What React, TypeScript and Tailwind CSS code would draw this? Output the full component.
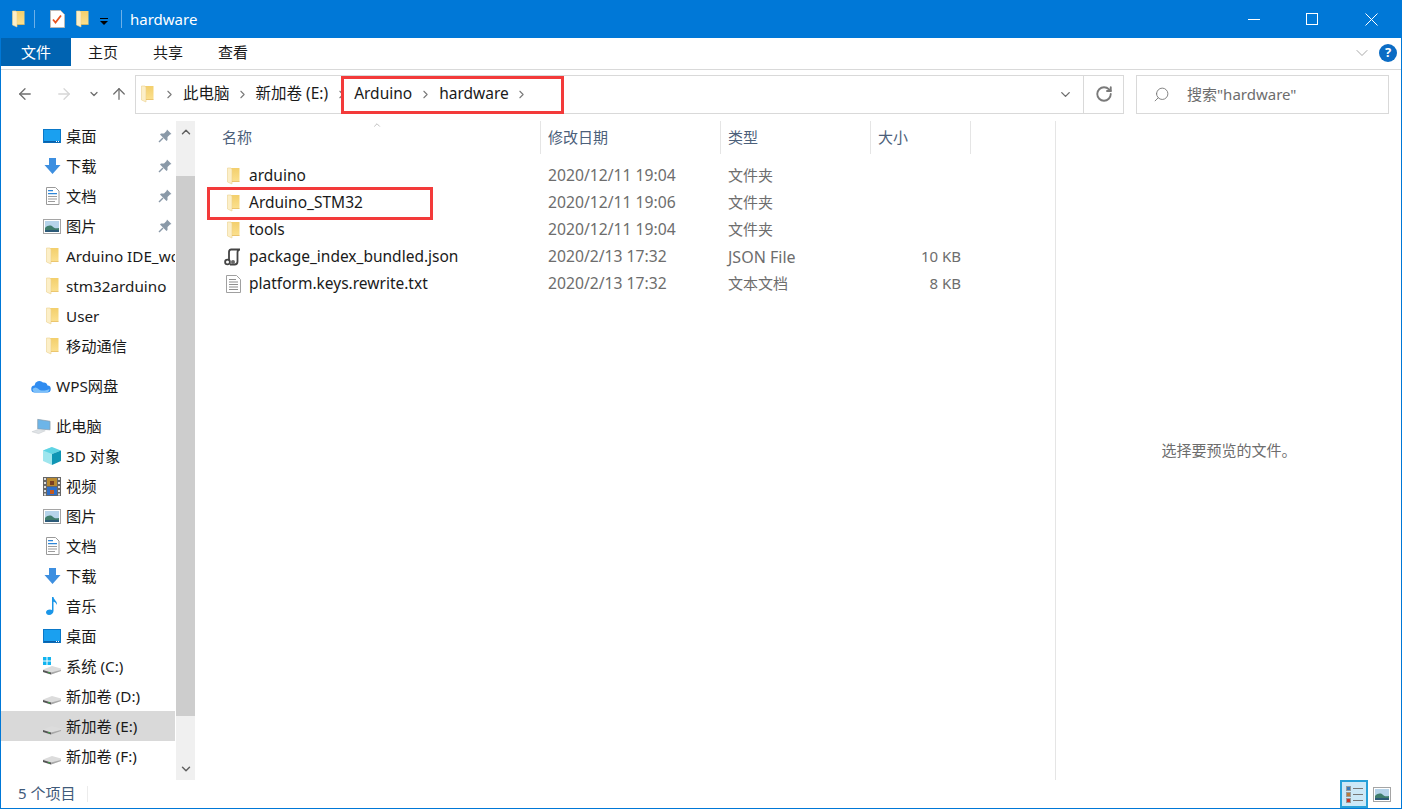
import { ReactNode } from "react";
import { ArrowLeft, ArrowRight, ArrowUp, ChevronDown, ChevronRight, ChevronUp, RotateCw, Search } from "lucide-react";

function Folder({ className = "w-[13px] h-[18px]" }: { className?: string }) {
  return (
    <svg className={className} viewBox="0 0 13 18">
      <defs>
        <linearGradient id="folderBody" x1="0" y1="0" x2="0" y2="1">
          <stop offset="0" stopColor="#f3cf6c" />
          <stop offset="1" stopColor="#fbe08e" />
        </linearGradient>
      </defs>
      <path d="M3 1h9.500v13.500H3z" fill="url(#folderBody)" />
      <path d="M.5 1H4l1 1.500v14.500L.5 15z" fill="#fcefc8" stroke="#ecd28e" strokeWidth="0.6" />
      <path d="M5 14h7.500v.8H5z" fill="#e6bb58" />
    </svg>
  );
}

function Desktop() {
  return (
    <svg className="w-[18px] h-[14px]" viewBox="0 0 18 14">
      <rect x="0.5" y="0.5" width="17" height="13" fill="#1aa0f0" stroke="#0a78c8" />
      <path d="M1 12h16v1.500H1z" fill="#0a5fa8" />
      <path d="M13 12h1v1h-1zM15 12h1v1h-1z" fill="#fff" />
    </svg>
  );
}

function Download() {
  return (
    <svg className="w-[17px] h-[18px]" viewBox="0 0 17 18">
      <path d="M5 1h7v7h4.500l-8 9-8-9H5z" fill="#3d8fe0" />
    </svg>
  );
}

function Doc() {
  return (
    <svg className="w-[15px] h-[18px]" viewBox="0 0 15 18">
      <path d="M1.500.5h9l3.500 3.500v13.500H1.500z" fill="#fff" stroke="#9a9a9a" />
      <path d="M3 3h5v1.200H3zM3 6h9v1.200H3z" fill="#2f86d8" />
      <path d="M3 9h9v1H3zM3 11.500h9v1H3zM3 14h7v1H3z" fill="#9c9c9c" />
    </svg>
  );
}

function Picture() {
  return (
    <svg className="w-[18px] h-[15px]" viewBox="0 0 18 15">
      <rect x="0.5" y="0.5" width="17" height="14" fill="#fff" stroke="#a5a5a5" />
      <rect x="2" y="2" width="14" height="11" fill="#b6d4ea" />
      <path d="M2 9c3-3 6-3 8-1s4 1 6 1v4H2z" fill="#3f7d6c" />
      <path d="M2 11h14v2H2z" fill="#2c5a78" />
    </svg>
  );
}

function Pin() {
  return (
    <svg className="w-[14px] h-[14px]" viewBox="0 0 14 14">
      <path d="M9 .5L13.500 5 12 5.500 9.500 8 9.500 11 8.500 12 2 5.500 3 4.500 6 4.500 8.500 2z" fill="#8a99a8" />
      <path d="M5 9L1 13" stroke="#8a99a8" strokeWidth="1.500" />
    </svg>
  );
}

function Cloud() {
  return (
    <svg className="w-[20px] h-[14px]" viewBox="0 0 20 14">
      <path d="M4 13.500a3.500 3.500 0 0 1-.5-7A5 5 0 0 1 12 3.500a4 4 0 0 1 4.500 3 3.500 3.500 0 0 1-.5 7z" fill="#2f8cf0" />
      <path d="M1.500 10c2-2 4-2 6 0s6 2 11 0c-.5 2-1.500 3.500-3 3.500H4c-1.300 0-2.200-1.500-2.500-3.500z" fill="#7cc0fa" />
    </svg>
  );
}

function Pc() {
  return (
    <svg className="w-[21px] h-[17px]" viewBox="0 0 21 17">
      <path d="M7 1l13 2v9l-13-1z" fill="#6db5e8" stroke="#8a9aa8" strokeWidth="0.7" />
      <path d="M1 14l7-2.500 7 1.500-7 3z" fill="#dfe3e6" stroke="#c3c8cc" strokeWidth="0.5" />
    </svg>
  );
}

function Cube() {
  return (
    <svg className="w-[18px] h-[18px]" viewBox="0 0 18 18">
      <path d="M9 0L0 3.500v10.500L9 18z" fill="#9fe6ee" />
      <path d="M0 3.500L9 7l9-3.500L9 0z" fill="#5fd4e4" />
      <path d="M9 7v11l9-4V3.500z" fill="#0f95b4" />
    </svg>
  );
}

function Film() {
  return (
    <svg className="w-[18px] h-[19px]" viewBox="0 0 18 19">
      <rect width="18" height="19" fill="#666" />
      <path d="M1 1h2v2H1zM1 5h2v2H1zM1 9h2v2H1zM1 13h2v2H1zM1 16.500h2v2H1zM15 1h2v2h-2zM15 5h2v2h-2zM15 9h2v2h-2zM15 13h2v2h-2zM15 16.500h2v2h-2z" fill="#ddd" />
      <rect x="4" y="1" width="10" height="8" fill="#b98a30" />
      <rect x="4" y="10" width="10" height="8" fill="#2f6fc8" />
      <path d="M7 4h4v4H7z" fill="#7a3f20" />
      <path d="M7 13h4v4H7z" fill="#c25a20" />
    </svg>
  );
}

function Music() {
  return (
    <svg className="w-[14px] h-[18px]" viewBox="0 0 14 18">
      <path d="M7 0h1.500c.3 3 4 4 3.500 8-.8-2-2.200-3-3.500-3.300V14c0 2.300-2 4-4.500 4C2.300 18 1 16.800 1 15.300S2.800 12.500 5 12.500c.8 0 1.500.2 2 .5z" fill="#1a96e8" />
    </svg>
  );
}

function Drive({ win = false }: { win?: boolean }) {
  return (
    <svg className="w-[18px] h-[18px]" viewBox="0 0 18 18">
      <path d="M0 12.500L9 9l9 2.500v2.500L8 17.500 0 15z" fill="#dcdcdc" />
      <path d="M0 13l8 2.500V17.500L0 15z" fill="#555" />
      <path d="M8 15.500l10-2.500V14L8 17.500z" fill="#a8a8a8" />
      <path d="M5 15l2 .6v.8l-2-.6z" fill="#3fae49" />
      {win && <path d="M0 0h3.500v3.500H0zM4.500 0H8v3.500H4.500zM0 4.500h3.500V8H0zM4.500 4.500H8V8H4.500z" fill="#10b4f0" />}
    </svg>
  );
}

function Script() {
  return (
    <svg className="w-[18px] h-[18px]" viewBox="0 0 18 18">
      <path d="M7 1.500h9M7 1.500c-2 0-2 2-2 3V12M16 1.500c-2 0-2.500 1-2.500 3v9c0 2-1.500 3-3 3H6" fill="none" stroke="#444" strokeWidth="1.800" />
      <circle cx="3.500" cy="14" r="2.400" fill="#fff" stroke="#444" strokeWidth="1.800" />
      <circle cx="9" cy="14" r="2" fill="#666" />
    </svg>
  );
}

function TextFile() {
  return (
    <svg className="w-[15px] h-[18px]" viewBox="0 0 15 18">
      <path d="M.5.5h10l4 4v13H.5z" fill="#fff" stroke="#a0a0a0" />
      <path d="M3 4h7v1H3zM3 6.500h9v1H3zM3 9h9v1H3zM3 11.500h9v1H3zM3 14h9v1H3z" fill="#8f8f8f" />
    </svg>
  );
}

function CheckDoc() {
  return (
    <svg className="w-[15px] h-[18px]" viewBox="0 0 15 18">
      <path d="M.5.5h10l4 4v13H.5z" fill="#fff" stroke="#b9b9b9" />
      <path d="M3 9.500l2.500 3L11 5.500" fill="none" stroke="#e8531f" strokeWidth="1.800" />
    </svg>
  );
}

type NavRow = { icon?: ReactNode; label?: string; pin?: boolean; indent?: boolean; selected?: boolean; gap?: boolean };

const navRows: NavRow[] = [
  { icon: <Desktop />, label: "桌面", pin: true },
  { icon: <Download />, label: "下载", pin: true },
  { icon: <Doc />, label: "文档", pin: true },
  { icon: <Picture />, label: "图片", pin: true },
  { icon: <Folder />, label: "Arduino IDE_workspace" },
  { icon: <Folder />, label: "stm32arduino" },
  { icon: <Folder />, label: "User" },
  { icon: <Folder />, label: "移动通信" },
  { gap: true },
  { icon: <Cloud />, label: "WPS网盘", indent: true },
  { gap: true },
  { icon: <Pc />, label: "此电脑", indent: true },
  { icon: <Cube />, label: "3D 对象" },
  { icon: <Film />, label: "视频" },
  { icon: <Picture />, label: "图片" },
  { icon: <Doc />, label: "文档" },
  { icon: <Download />, label: "下载" },
  { icon: <Music />, label: "音乐" },
  { icon: <Desktop />, label: "桌面" },
  { icon: <Drive win />, label: "系统 (C:)" },
  { icon: <Drive />, label: "新加卷 (D:)" },
  { icon: <Drive />, label: "新加卷 (E:)", selected: true },
  { icon: <Drive />, label: "新加卷 (F:)" },
];

const files = [
  { icon: <Folder />, name: "arduino", date: "2020/12/11 19:04", type: "文件夹", size: "" },
  { icon: <Folder />, name: "Arduino_STM32", date: "2020/12/11 19:06", type: "文件夹", size: "" },
  { icon: <Folder />, name: "tools", date: "2020/12/11 19:04", type: "文件夹", size: "" },
  { icon: <Script />, name: "package_index_bundled.json", date: "2020/2/13 17:32", type: "JSON File", size: "10 KB" },
  { icon: <TextFile />, name: "platform.keys.rewrite.txt", date: "2020/2/13 17:32", type: "文本文档", size: "8 KB" },
];

function Crumb({ label }: { label: string }) {
  return (
    <>
      <span className="text-[#1a1a1a] whitespace-nowrap">{label}</span>
      <ChevronRight className="w-[13px] h-[13px] mx-[6.500px] text-[#7a7a7a]" strokeWidth={2} />
    </>
  );
}

export default function App() {
  return (
    <div className="relative w-[1402px] h-[809px] overflow-hidden bg-white border-x border-b border-[#0078d7] flex flex-col text-[15px] text-[#1a1a1a] font-['Noto_Sans','Noto_Sans_CJK_SC',sans-serif]">
      {/* title bar */}
      <div className="h-[38px] shrink-0 -mx-px bg-[#0078d7] flex items-center text-white">
        <div className="ml-[11px] w-[14px] flex justify-center"><Folder /></div>
        <div className="ml-[9px] w-px h-[18px] bg-[#6db0e8]" />
        <div className="ml-[15px]"><CheckDoc /></div>
        <div className="ml-[11px]"><Folder /></div>
        <div className="ml-[11px] flex flex-col items-center gap-[2px] mt-[4px]">
          <div className="w-[8px] h-px bg-black" />
          <div className="w-0 h-0 border-x-[4px] border-x-transparent border-t-[4px] border-t-black" />
        </div>
        <div className="ml-[13px] w-px h-[18px] bg-[#6db0e8]" />
        <span className="ml-[8px]">hardware</span>
        <div className="ml-auto flex items-center">
          <div className="w-[58px] flex justify-center"><div className="w-[12px] h-px bg-white" /></div>
          <div className="w-[58px] flex justify-center"><div className="w-[12px] h-[12px] border border-white" /></div>
          <svg className="mx-[24px] w-[13px] h-[13px]" viewBox="0 0 13 13">
            <path d="M.5.5l12 12M12.500.5l-12 12" stroke="#fff" />
          </svg>
        </div>
      </div>

      {/* ribbon tabs */}
      <div className="h-[32px] shrink-0 border-b border-[#d9d9d9] flex items-start">
        <div className="w-[70px] h-[28px] bg-[#0063b1] text-white flex items-center justify-center">文件</div>
        <div className="h-[28px] flex items-center gap-[35px] ml-[17px]">
          <span>主页</span>
          <span>共享</span>
          <span>查看</span>
        </div>
        <div className="ml-auto flex items-center h-[28px] mt-[1px]">
          <ChevronDown className="w-[20px] h-[20px] text-[#a0a0a0]" strokeWidth={1.100} />
          <div className="ml-[7px] mr-[4px] w-[18px] h-[18px] rounded-full bg-[#0b6cc4] text-white text-[13px] font-bold flex items-center justify-center">?</div>
        </div>
      </div>

      {/* address row */}
      <div className="h-[48px] shrink-0 flex items-center">
        <ArrowLeft className="ml-[15px] w-[18px] h-[18px] text-[#6e6e6e]" strokeWidth={1.700} />
        <ArrowRight className="ml-[21px] w-[18px] h-[18px] text-[#d6d6d6]" strokeWidth={1.700} />
        <ChevronDown className="ml-[15px] w-[12px] h-[12px] text-[#6e6e6e]" strokeWidth={2.500} />
        <ArrowUp className="ml-[10px] w-[18px] h-[18px] text-[#6e6e6e]" strokeWidth={1.700} />
        <div className="ml-[7px] h-[39px] w-[989px] border border-[#d9d9d9] flex items-center text-[15.500px]">
          <div className="ml-[5px]"><Folder /></div>
          <ChevronRight className="ml-[9px] mr-[7px] w-[13px] h-[13px] text-[#7a7a7a]" strokeWidth={2} />
          <Crumb label="此电脑" />
          <Crumb label="新加卷 (E:)" />
          <Crumb label="Arduino" />
          <div className="ml-[1px]" />
          <Crumb label="hardware" />
          <div className="ml-auto w-[36px] h-full flex items-center justify-center border-r border-[#d9d9d9]">
            <ChevronDown className="w-[15px] h-[15px] text-[#6e6e6e]" strokeWidth={2.200} />
          </div>
          <div className="w-[39px] flex justify-center">
            <RotateCw className="w-[18px] h-[18px] text-[#7a7a7a]" strokeWidth={2.500} />
          </div>
        </div>
        <div className="ml-[12px] h-[39px] w-[253px] border border-[#d9d9d9] flex items-center text-[#6d6d6d]">
          <Search className="ml-[16px] w-[17px] h-[17px] -scale-x-100 text-[#7a7a7a]" strokeWidth={1.300} />
          <span className="ml-[17px]">搜索"hardware"</span>
        </div>
      </div>

      {/* body */}
      <div className="flex-1 min-h-0 flex pt-[3px]">
        <div className="w-[174px] shrink-0 overflow-hidden">
          {navRows.map((r, i) =>
            r.gap ? (
              <div key={i} className="h-[10px]" />
            ) : (
              <div key={i} className={`h-[30px] flex items-center ${r.selected ? "bg-[#d9d9d9]" : ""}`}>
                <div className={`${r.indent ? "ml-[30px]" : "ml-[41px]"} w-[20px] flex justify-center shrink-0`}>{r.icon}</div>
                <span className={`${r.indent ? "ml-[5px]" : "ml-[4px]"} whitespace-nowrap overflow-hidden text-[15.250px] flex-1`}>{r.label}</span>
                {r.pin && <div className="mr-[3px] ml-auto shrink-0"><Pin /></div>}
              </div>
            )
          )}
        </div>

        {/* nav scrollbar */}
        <div className="w-[19px] ml-px shrink-0 bg-[#f0f0f0] flex flex-col h-[659px]">
          <div className="h-[55px] flex justify-center pt-[4px]">
            <ChevronUp className="w-[14px] h-[14px] text-[#606060]" strokeWidth={2.500} />
          </div>
          <div className="h-[540px] bg-[#cdcdcd]" />
          <div className="flex-1 flex items-end justify-center pb-[4px]">
            <ChevronDown className="w-[14px] h-[14px] text-[#606060]" strokeWidth={2.500} />
          </div>
        </div>

        {/* file list */}
        <div className="w-[861px] shrink-0 border-r border-[#e5e5e5] text-[15.500px]">
          <div className="relative h-[33px] ml-[2px] grid grid-cols-[344px_180px_150px_100px] text-[15px] text-[#4c607a]">
            <div className="pl-[25px] pt-[5px] border-r border-[#e5e5e5]">名称</div>
            <div className="pl-[7px] pt-[5px] border-r border-[#e5e5e5]">修改日期</div>
            <div className="pl-[7px] pt-[5px] border-r border-[#e5e5e5]">类型</div>
            <div className="pl-[7px] pt-[5px] border-r border-[#e5e5e5]">大小</div>
            <ChevronUp className="absolute left-[173px] -top-[1px] w-[14px] h-[10px] text-[#8a8a8a]" strokeWidth={1.300} />
          </div>
          <div className="pt-[8px]">
            {files.map((f) => (
              <div key={f.name} className="ml-[1px] h-[27px] grid grid-cols-[344px_180px_150px_100px] items-center">
                <div className="flex items-center">
                  <div className="ml-[27px] w-[20px] flex justify-center shrink-0">{f.icon}</div>
                  <span className="ml-[6px] whitespace-nowrap">{f.name}</span>
                </div>
                <div className="pl-[8px] text-[#6d6d6d] text-[15.700px]">{f.date}</div>
                <div className={`pl-[8px] text-[#6d6d6d] ${f.type === "JSON File" ? "text-[16px]" : "text-[15px]"}`}>{f.type}</div>
                <div className="pr-[9px] text-right text-[#6d6d6d] text-[15px]">{f.size}</div>
              </div>
            ))}
          </div>
        </div>

        {/* preview pane */}
        <div className="flex-1 flex items-center justify-center text-[#6d6d6d] pl-[1px]">选择要预览的文件。</div>
      </div>

      {/* status bar */}
      <div className="h-[28px] shrink-0 flex items-center text-[#3f5a7a]">
        <span className="ml-[17px] pb-[1px]">5 个项目</span>
        <div className="ml-[12px] w-px h-[16px] bg-[#ececec]" />
        <div className="ml-auto w-[28px] h-[28px] bg-[#cce8f7] border-2 border-[#27a0d8] flex flex-col justify-center gap-[1px] pl-[4px]">
          {["#3a7ab8", "#b87a3a", "#c8382a"].map((c) => (
            <div key={c} className="flex items-center gap-[2px]">
              <div className="w-[5px] h-[5px] border border-[#999]" style={{ backgroundColor: c }} />
              <div className="w-[10px] h-px bg-[#777]" />
            </div>
          ))}
        </div>
        <div className="ml-[5px] mr-[10px] flex"><Picture /></div>
      </div>

      {/* red annotation boxes */}
      <div className="absolute left-[340px] top-[76px] w-[223px] h-[38px] border-[3px] border-[#f33a3a]" />
      <div className="absolute left-[206px] top-[187px] w-[226px] h-[33px] border-[3px] border-[#f33a3a]" />
    </div>
  );
}
